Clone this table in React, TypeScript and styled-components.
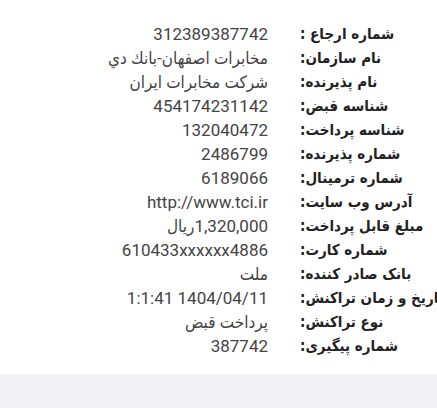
import React from "react";
import styled, { createGlobalStyle } from "styled-components";

type Row = {
    label: string;
    value: string;
};

const rows: Array<Row> = [
    { label: "شماره ارجاع :", value: "312389387742" },
    { label: "نام سازمان:", value: "مخابرات اصفهان-بانك دي" },
    { label: "نام پذیرنده:", value: "شرکت مخابرات ایران" },
    { label: "شناسه قبض:", value: "454174231142" },
    { label: "شناسه پرداخت:", value: "132040472" },
    { label: "شماره پذیرنده:", value: "2486799" },
    { label: "شماره ترمینال:", value: "6189066" },
    { label: "آدرس وب سایت:", value: "http://www.tci.ir" },
    { label: "مبلغ قابل پرداخت:", value: "1,320,000ریال" },
    { label: "شماره کارت:", value: "610433xxxxxx4886" },
    { label: "بانک صادر کننده:", value: "ملت" },
    { label: "تاریخ و زمان تراکنش:", value: "1:1:41 1404/04/11" },
    { label: "نوع تراکنش:", value: "پرداخت قبض" },
    { label: "شماره پیگیری:", value: "387742" },
];

const GlobalStyle = createGlobalStyle`
    body {
        margin: 0;
        background: #f2f2f4;
        font-family: Roboto, "DejaVu Sans", sans-serif;
    }
`;

const Card = styled.div`
    background: #ffffff;
    box-shadow: 0 1px 2px rgba(0, 0, 0, 0.12);
    padding: 22px 0 16px;
    overflow: hidden;
`;

const Table = styled.div`
    display: grid;
    grid-template-columns: 268px max-content;
    column-gap: 32px;
    direction: ltr;
`;

const Value = styled.div`
    text-align: right;
    white-space: nowrap;
    font-family: Roboto, "DejaVu Sans Condensed", "DejaVu Sans", sans-serif;
    font-size: 17px;
    line-height: 24px;
    color: #444444;
    unicode-bidi: plaintext;
`;

const Label = styled.div`
    text-align: left;
    white-space: nowrap;
    font-family: "DejaVu Sans Condensed", "DejaVu Sans", sans-serif;
    font-size: 15px;
    line-height: 24px;
    font-weight: 700;
    color: #222222;
    direction: rtl;
`;

const App: React.FC = () => {
    return (
        <>
            <GlobalStyle />
            <Card>
                <Table>
                    {rows.map(({ label, value }) => (
                        <React.Fragment key={label}>
                            <Value>{value}</Value>
                            <Label>{label}</Label>
                        </React.Fragment>
                    ))}
                </Table>
            </Card>
        </>
    );
};

export default App;
